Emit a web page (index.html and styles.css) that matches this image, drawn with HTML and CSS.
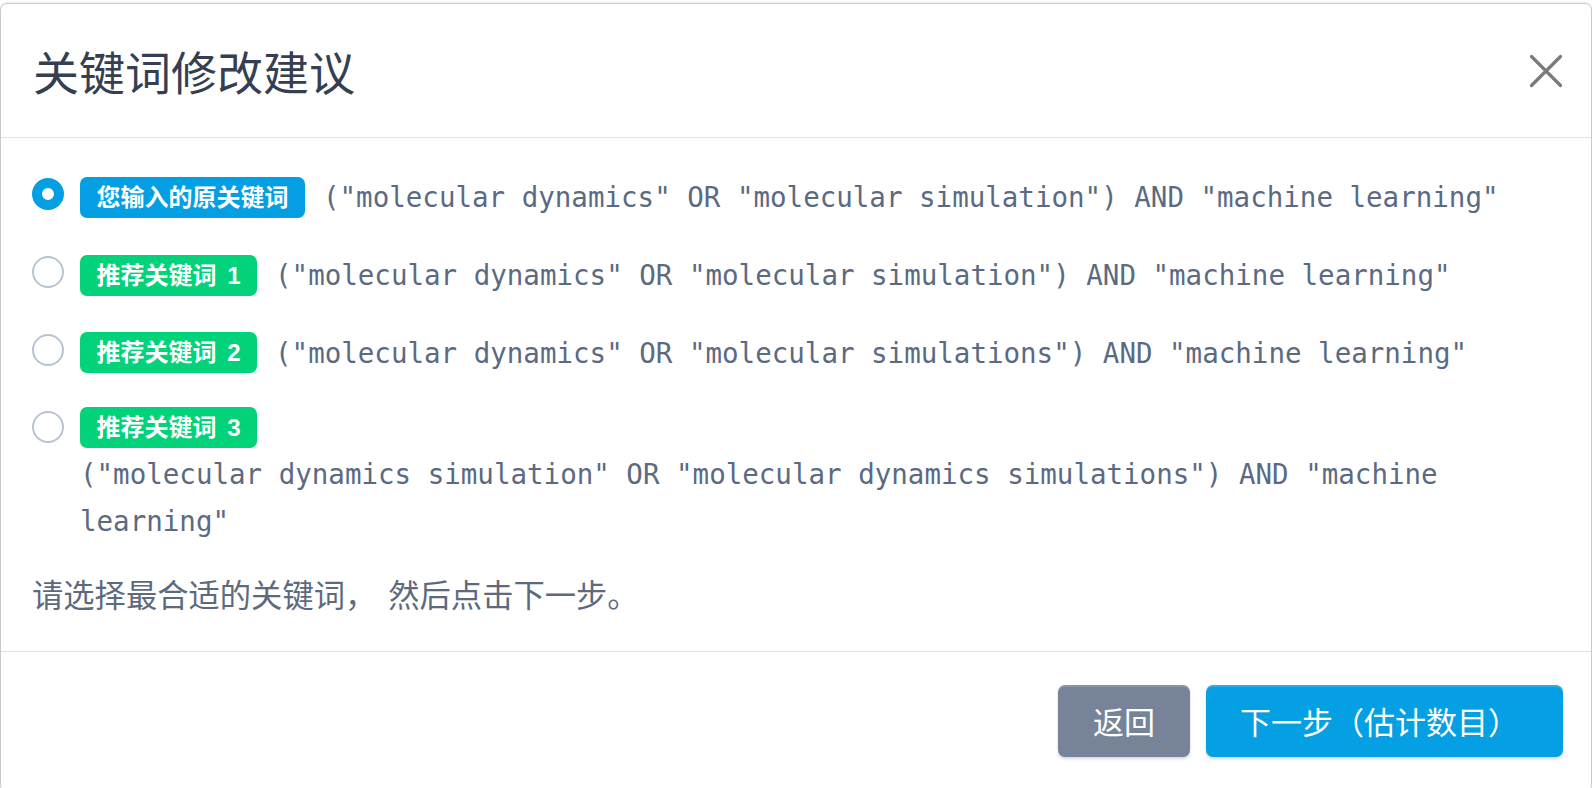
FILE: index.html
```html
<!DOCTYPE html>
<html lang="zh-CN">
<head>
<meta charset="utf-8">
<title>关键词修改建议</title>
<link rel="stylesheet" href="styles.css">
</head>
<body>
<div class="modal">
  <div class="modal-header">
    <h2 class="modal-title">关键词修改建议</h2>
    <button class="close" type="button" aria-label="关闭">
      <svg width="34" height="34" viewBox="0 0 34 34"><path d="M2.5 2.5 L31.5 31.5 M31.5 2.5 L2.5 31.5" stroke="#7a7a7a" stroke-width="3.2" stroke-linecap="round" fill="none"/></svg>
    </button>
  </div>
  <div class="modal-body">
    <div class="options">
      <div class="option">
        <span class="radio radio-checked"></span>
        <div class="option-content">
          <span class="badge badge-blue">您输入的原关键词</span>
          <span class="query">("molecular dynamics" OR "molecular simulation") AND "machine learning"</span>
        </div>
      </div>
      <div class="option">
        <span class="radio"></span>
        <div class="option-content">
          <span class="badge badge-green">推荐关键词 1</span>
          <span class="query">("molecular dynamics" OR "molecular simulation") AND "machine learning"</span>
        </div>
      </div>
      <div class="option">
        <span class="radio"></span>
        <div class="option-content">
          <span class="badge badge-green">推荐关键词 2</span>
          <span class="query">("molecular dynamics" OR "molecular simulations") AND "machine learning"</span>
        </div>
      </div>
      <div class="option">
        <span class="radio"></span>
        <div class="option-content">
          <span class="badge badge-green">推荐关键词 3</span>
          <span class="query">("molecular dynamics simulation" OR "molecular dynamics simulations") AND "machine learning"</span>
        </div>
      </div>
    </div>
    <p class="hint">请选择最合适的关键词， 然后点击下一步。</p>
  </div>
  <div class="modal-footer">
    <button class="btn btn-gray" type="button">返回</button>
    <button class="btn btn-blue" type="button">下一步（估计数目）</button>
  </div>
</div>
</body>
</html>
```

FILE: styles.css
```css
html, body {
  margin: 0;
  padding: 0;
  background: #ffffff;
  overflow: hidden;
}

body {
  font-family: "Liberation Sans", "Noto Sans CJK SC", sans-serif;
  padding-top: 3px;
}

.modal {
  box-sizing: border-box;
  width: 1592px;
  background: #ffffff;
  border: 1px solid #c9c9c9;
  border-radius: 7px;
  box-shadow: 0 -1px 2px rgba(0, 0, 0, 0.08);
}

.modal-header {
  display: flex;
  align-items: center;
  justify-content: space-between;
  padding: 28px 28px 28px 32px;
  border-bottom: 1px solid #dce3ec;
}

.modal-title {
  margin: 0;
  font-family: "Noto Sans CJK SC", sans-serif;
  font-size: 46px;
  font-weight: 400;
  line-height: 77px;
  color: #353f51;
}

.close {
  display: flex;
  padding: 0;
  margin: 0;
  border: 0;
  background: transparent;
}

.modal-body {
  padding: 36px 32px 37px 31px;
}

.options {
  display: flex;
  flex-direction: column;
  gap: 31px;
}

.option {
  display: flex;
  align-items: flex-start;
  gap: 16px;
}

.radio {
  box-sizing: border-box;
  flex: none;
  width: 32px;
  height: 32px;
  margin-top: 4px;
  border-radius: 50%;
  border: 2px solid #b9c3d3;
  background: #ffffff;
}

.radio-checked {
  border: 10px solid #049fe3;
  background: #ffffff;
}

.option-content {
  flex: 1;
  display: flex;
  flex-wrap: wrap;
  align-items: center;
  column-gap: 18px;
  row-gap: 3px;
}

.badge {
  flex: none;
  padding: 0 16.5px;
  height: 41px;
  line-height: 41px;
  border-radius: 7px;
  color: #ffffff;
  font-size: 24px;
  font-weight: 700;
  word-spacing: 4px;
  white-space: nowrap;
}

.badge-blue {
  background: #049fe3;
}

.badge-green {
  background: #02d27a;
}

.query {
  font-family: "DejaVu Sans Mono", monospace;
  font-size: 27.5px;
  line-height: 1.7;
  color: #5b6a82;
}

.hint {
  margin: 29px 0 0;
  font-family: "Noto Sans CJK SC", sans-serif;
  font-size: 31.3px;
  line-height: 40px;
  word-spacing: 5px;
  color: #5d6a7e;
}

.modal-footer {
  display: flex;
  justify-content: flex-end;
  gap: 16px;
  padding: 33px 28px 34px;
  border-top: 1px solid #dce3ec;
}

.btn {
  height: 72px;
  padding: 0 35px;
  border: 0;
  border-radius: 7px;
  font-family: "Noto Sans CJK SC", sans-serif;
  font-size: 31px;
  color: #ffffff;
  box-shadow: inset 0 2px 0 rgba(255, 255, 255, 0.14), 0 2px 3px rgba(0, 0, 0, 0.16);
}

.btn-gray {
  background: #778399;
}

.btn-blue {
  padding: 0 44px 0 34px;
  background: #04a0e3;
}
```
